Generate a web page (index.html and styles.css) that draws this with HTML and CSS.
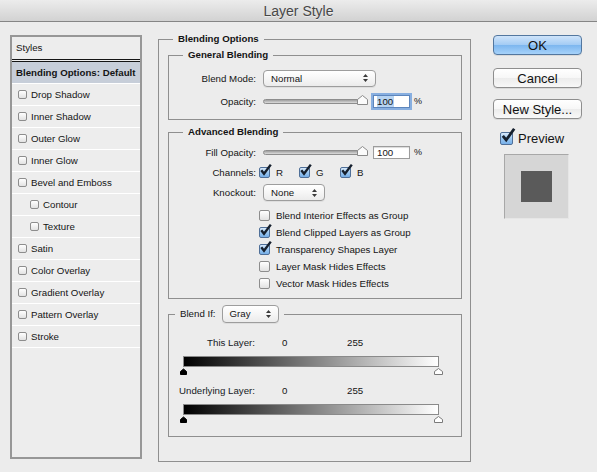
FILE: index.html
```html
<!DOCTYPE html>
<html>
<head>
<meta charset="utf-8">
<title>Layer Style</title>
<link rel="stylesheet" href="styles.css">
</head>
<body>
<div class="titlebar">Layer Style</div>
<div class="main">
  <div class="styles">
    <div class="styles-head">Styles</div>
    <div class="item sel">Blending Options: Default</div>
    <div class="item"><span class="cb sm"></span>Drop Shadow</div>
    <div class="item"><span class="cb sm"></span>Inner Shadow</div>
    <div class="item"><span class="cb sm"></span>Outer Glow</div>
    <div class="item"><span class="cb sm"></span>Inner Glow</div>
    <div class="item"><span class="cb sm"></span>Bevel and Emboss</div>
    <div class="item sub"><span class="cb sm"></span>Contour</div>
    <div class="item sub"><span class="cb sm"></span>Texture</div>
    <div class="item"><span class="cb sm"></span>Satin</div>
    <div class="item"><span class="cb sm"></span>Color Overlay</div>
    <div class="item"><span class="cb sm"></span>Gradient Overlay</div>
    <div class="item"><span class="cb sm"></span>Pattern Overlay</div>
    <div class="item"><span class="cb sm"></span>Stroke</div>
  </div>

  <fieldset class="group outer">
    <legend>Blending Options</legend>

    <fieldset class="group general">
      <legend>General Blending</legend>
      <div class="row">
        <span class="lbl">Blend Mode:</span>
        <div class="select w-mode"><span>Normal</span><svg class="arr" width="5" height="8" viewBox="0 0 5 8"><path d="M2.5 0 L5 3 H0 Z M2.5 8 L5 5 H0 Z" fill="#3a3a3a"/></svg></div>
      </div>
      <div class="row row2">
        <span class="lbl">Opacity:</span>
        <div class="slider">
          <div class="track"></div>
          <svg class="thumb" width="11" height="10" viewBox="0 0 11 10"><path d="M5.5 0.5 L10.5 4.5 V9.5 H0.5 V4.5 Z" fill="#fbfbfb" stroke="#8a8a8a"/></svg>
        </div>
        <div class="num focus"><span class="hl">100</span></div>
        <span class="pct">%</span>
      </div>
    </fieldset>

    <fieldset class="group advanced">
      <legend>Advanced Blending</legend>
      <div class="row">
        <span class="lbl">Fill Opacity:</span>
        <div class="slider">
          <div class="track"></div>
          <svg class="thumb" width="11" height="10" viewBox="0 0 11 10"><path d="M5.5 0.5 L10.5 4.5 V9.5 H0.5 V4.5 Z" fill="#fbfbfb" stroke="#8a8a8a"/></svg>
        </div>
        <div class="num">100</div>
        <span class="pct">%</span>
      </div>
      <div class="row gap4">
        <span class="lbl">Channels:</span>
        <div class="channels">
          <span class="chan"><span class="cb on"><svg class="tick" width="14" height="14" viewBox="0 0 14 14"><path d="M2.3 6.3 L5 9.8 L11.8 0.6" fill="none" stroke="#16202e" stroke-width="2.4"/></svg></span>R</span>
          <span class="chan c2"><span class="cb on"><svg class="tick" width="14" height="14" viewBox="0 0 14 14"><path d="M2.3 6.3 L5 9.8 L11.8 0.6" fill="none" stroke="#16202e" stroke-width="2.4"/></svg></span>G</span>
          <span class="chan"><span class="cb on"><svg class="tick" width="14" height="14" viewBox="0 0 14 14"><path d="M2.3 6.3 L5 9.8 L11.8 0.6" fill="none" stroke="#16202e" stroke-width="2.4"/></svg></span>B</span>
        </div>
      </div>
      <div class="row gap4 tall">
        <span class="lbl">Knockout:</span>
        <div class="select w-ko"><span>None</span><svg class="arr" width="5" height="8" viewBox="0 0 5 8"><path d="M2.5 0 L5 3 H0 Z M2.5 8 L5 5 H0 Z" fill="#3a3a3a"/></svg></div>
      </div>
      <div class="checks">
        <div class="crow"><span class="cb"></span>Blend Interior Effects as Group</div>
        <div class="crow"><span class="cb on"><svg class="tick" width="14" height="14" viewBox="0 0 14 14"><path d="M2.3 6.3 L5 9.8 L11.8 0.6" fill="none" stroke="#16202e" stroke-width="2.4"/></svg></span>Blend Clipped Layers as Group</div>
        <div class="crow"><span class="cb on"><svg class="tick" width="14" height="14" viewBox="0 0 14 14"><path d="M2.3 6.3 L5 9.8 L11.8 0.6" fill="none" stroke="#16202e" stroke-width="2.4"/></svg></span>Transparency Shapes Layer</div>
        <div class="crow"><span class="cb"></span>Layer Mask Hides Effects</div>
        <div class="crow"><span class="cb"></span>Vector Mask Hides Effects</div>
      </div>
    </fieldset>

    <fieldset class="group blendif">
      <legend><span>Blend If:</span><div class="select w-gray"><span>Gray</span><svg class="arr" width="5" height="8" viewBox="0 0 5 8"><path d="M2.5 0 L5 3 H0 Z M2.5 8 L5 5 H0 Z" fill="#3a3a3a"/></svg></div></legend>
      <div class="brow first">
        <span class="lbl2">This Layer:</span><span class="v0">0</span><span>255</span>
      </div>
      <div class="bar"></div>
      <div class="thumbs">
        <svg width="9" height="7" viewBox="0 0 9 7"><path d="M4.5 1 L7.5 3.5 V6.5 H1.5 V3.5 Z" fill="#000" stroke="#000"/></svg>
        <svg width="9" height="7" viewBox="0 0 9 7"><path d="M4.5 0.5 L8.5 3.5 V6.5 H0.5 V3.5 Z" fill="#fff" stroke="#7a7a7a"/></svg>
      </div>
      <div class="brow second">
        <span class="lbl2">Underlying Layer:</span><span class="v0">0</span><span>255</span>
      </div>
      <div class="bar"></div>
      <div class="thumbs">
        <svg width="9" height="7" viewBox="0 0 9 7"><path d="M4.5 1 L7.5 3.5 V6.5 H1.5 V3.5 Z" fill="#000" stroke="#000"/></svg>
        <svg width="9" height="7" viewBox="0 0 9 7"><path d="M4.5 0.5 L8.5 3.5 V6.5 H0.5 V3.5 Z" fill="#fff" stroke="#7a7a7a"/></svg>
      </div>
    </fieldset>
  </fieldset>

  <div class="side">
    <div class="btn ok">OK</div>
    <div class="btn cancel">Cancel</div>
    <div class="btn newstyle">New Style...</div>
    <div class="preview-row"><span class="cb on big"><svg class="tick" width="17" height="17" viewBox="0 0 17 17"><path d="M2.8 7.8 L6.2 12 L14.2 0.8" fill="none" stroke="#16202e" stroke-width="2.8"/></svg></span><span>Preview</span></div>
    <div class="preview-box"><div class="swatch"></div></div>
  </div>
</div>
</body>
</html>
```
FILE: styles.css
```css
* { box-sizing: border-box; }
html, body { margin: 0; padding: 0; }
body {
  width: 597px;
  height: 472px;
  overflow: hidden;
  background: #ececec;
  font-family: "Liberation Sans", Arial, sans-serif;
  font-size: 9.7px;
  color: #141414;
}

.titlebar {
  height: 22px;
  border-bottom: 1px solid #858585;
  background: linear-gradient(#ececec, #d2d2d2);
  text-align: center;
  font-size: 14px;
  line-height: 22px;
  color: #474747;
  text-shadow: 0 1px 0 rgba(255,255,255,0.5);
}

.main {
  display: flex;
  align-items: flex-start;
  padding-left: 10px;
}

/* Styles list */
.styles {
  flex: none;
  width: 132px;
  height: 424px;
  margin-top: 13px;
  border: 2px solid #979797;
  background: #ededed;
}
.styles-head {
  height: 25px;
  line-height: 22px;
  padding-left: 4px;
  border-bottom: 3px double #151515;
}
.item {
  display: flex;
  align-items: center;
  height: 22px;
  border-bottom: 1px solid #ffffff;
  padding-left: 6px;
}
.item.sel {
  background: #c7ced9;
  font-weight: bold;
  padding-left: 4px;
}
.item.sub { padding-left: 18px; }
.item .cb { margin-right: 4px; }

/* checkboxes */
.cb {
  position: relative;
  flex: none;
  display: inline-block;
  width: 11px;
  height: 11px;
  border: 1px solid #8d8d8d;
  border-radius: 2px;
  background: linear-gradient(#ffffff, #e2e2e2);
}
.cb.sm { width: 9px; height: 9px; }
.cb.on {
  background: linear-gradient(#d8eafc, #9cc8f1 50%, #76afe8);
  border-color: #4f6f98;
}
.cb.big { width: 13px; height: 13px; }
.tick {
  position: absolute;
  left: -1px;
  top: -4px;
  overflow: visible;
}
.cb.big .tick { left: -1px; top: -5px; }

/* fieldsets */
.group {
  margin: 0;
  padding: 0;
  min-width: 0;
  border: 1px solid #8f8f8f;
}
.group > legend {
  padding: 0 5px;
  margin-left: 14px;
  font-weight: bold;
  line-height: 12px;
}
.outer {
  flex: none;
  width: 313px;
  margin: 11px 0 0 16px;
  padding: 4px 8px 24px 9px;
}
.outer > legend { margin-left: 5px; }

.general { padding: 9px 0 10px; }
.advanced { margin-top: 6px; padding: 6px 0 6px; }
.blendif { margin-top: 6px; padding: 13px 0 13px; }
.blendif > legend {
  display: flex;
  align-items: center;
  margin-left: 6px;
  font-weight: normal;
  line-height: 18px;
}
.blendif > legend .select { margin-left: 6px; height: 18px; }

.row {
  display: flex;
  align-items: center;
  height: 16px;
}
.row2 { margin-top: 7px; }
.gap4 { margin-top: 4px; }
.row.tall { height: 17px; }
.lbl {
  flex: none;
  width: 87px;
  text-align: right;
}

.select {
  flex: none;
  display: flex;
  align-items: center;
  justify-content: space-between;
  height: 17px;
  margin-left: 7px;
  padding: 0 7px 0 7px;
  border: 1px solid #9d9d9d;
  border-radius: 4px;
  background: linear-gradient(#ffffff, #f6f6f6 50%, #ebebeb);
  box-shadow: 0 1px 0 rgba(0,0,0,0.06);
}
.w-mode { width: 113px; }
.w-ko { width: 62px; }
.w-gray { width: 57px; }

.slider {
  flex: none;
  display: flex;
  align-items: center;
  margin-left: 7px;
}
.track {
  width: 100px;
  height: 5px;
  border: 1px solid #8d8d8d;
  border-radius: 3px;
  background: linear-gradient(#9e9e9e, #dcdcdc);
}
.thumb { margin-left: -6px; margin-top: -3px; }

.num {
  flex: none;
  width: 37px;
  height: 13px;
  margin-left: 5px;
  padding-left: 3px;
  line-height: 11px;
  background: #ffffff;
  border: 1px solid #9c9c9c;
  box-shadow: inset 0 1px 1px rgba(0,0,0,0.15);
}
.num.focus {
  border-color: #5d86bd;
  box-shadow: 0 0 0 2px #88afe0;
}
.hl { background: #b7d4f2; padding: 0 1px 0 0; }
.pct { margin-left: 4px; font-size: 9px; }

.channels { display: flex; margin-left: 3px; }
.chan {
  display: flex;
  align-items: center;
  width: 40px;
}
.chan.c2 { width: 41px; }
.chan .cb { margin-right: 6px; }

.checks { margin-top: 6px; padding-left: 90px; }
.crow {
  display: flex;
  align-items: center;
  height: 17px;
}
.crow .cb { margin-right: 6px; }

/* blend if */
.brow {
  display: flex;
  align-items: center;
  height: 13px;
}
.brow.second { margin-top: 9px; }
.lbl2 { width: 86px; text-align: right; color: #161a24; }
.v0 { width: 65px; margin-left: 27px; }
.bar {
  width: 256px;
  height: 11px;
  margin: 7px 0 0 14px;
  border: 1px solid #8a8a8a;
  background: linear-gradient(to right, #000000, #ffffff);
}
.thumbs {
  display: flex;
  justify-content: space-between;
  width: 264px;
  height: 7px;
  margin: 1px 0 0 10px;
}
.thumbs svg { display: block; }

/* right side */
.side {
  flex: none;
  width: 89px;
  margin: 13px 0 0 22px;
  display: flex;
  flex-direction: column;
}
.btn {
  height: 20px;
  display: flex;
  align-items: center;
  justify-content: center;
  font-size: 13px;
  color: #111;
  border: 1px solid #8e8e8e;
  border-radius: 4px;
  background: linear-gradient(#ffffff, #f7f7f7 50%, #ececec 51%, #f8f8f8);
  box-shadow: 0 1px 0 rgba(0,0,0,0.08);
}
.btn.ok {
  border-color: #53779f;
  background: linear-gradient(#cfe4fa, #a2cbf4 50%, #7cb6ef 51%, #a6d2fa);
}
.btn.cancel { margin-top: 13px; }
.btn.newstyle { margin-top: 11px; }

.preview-row {
  display: flex;
  align-items: center;
  height: 14px;
  margin-top: 12px;
  padding-left: 7px;
  font-size: 13px;
}
.preview-row .cb { margin-right: 5px; }

.preview-box {
  width: 65px;
  height: 65px;
  margin: 9px 0 0 11px;
  display: flex;
  align-items: center;
  justify-content: center;
  background: #d6d6d6;
  border: 1px solid;
  border-color: #a8a8a8 #e6e6e6 #e6e6e6 #a8a8a8;
}
.swatch {
  width: 31px;
  height: 31px;
  background: #5a5a5a;
}
```
